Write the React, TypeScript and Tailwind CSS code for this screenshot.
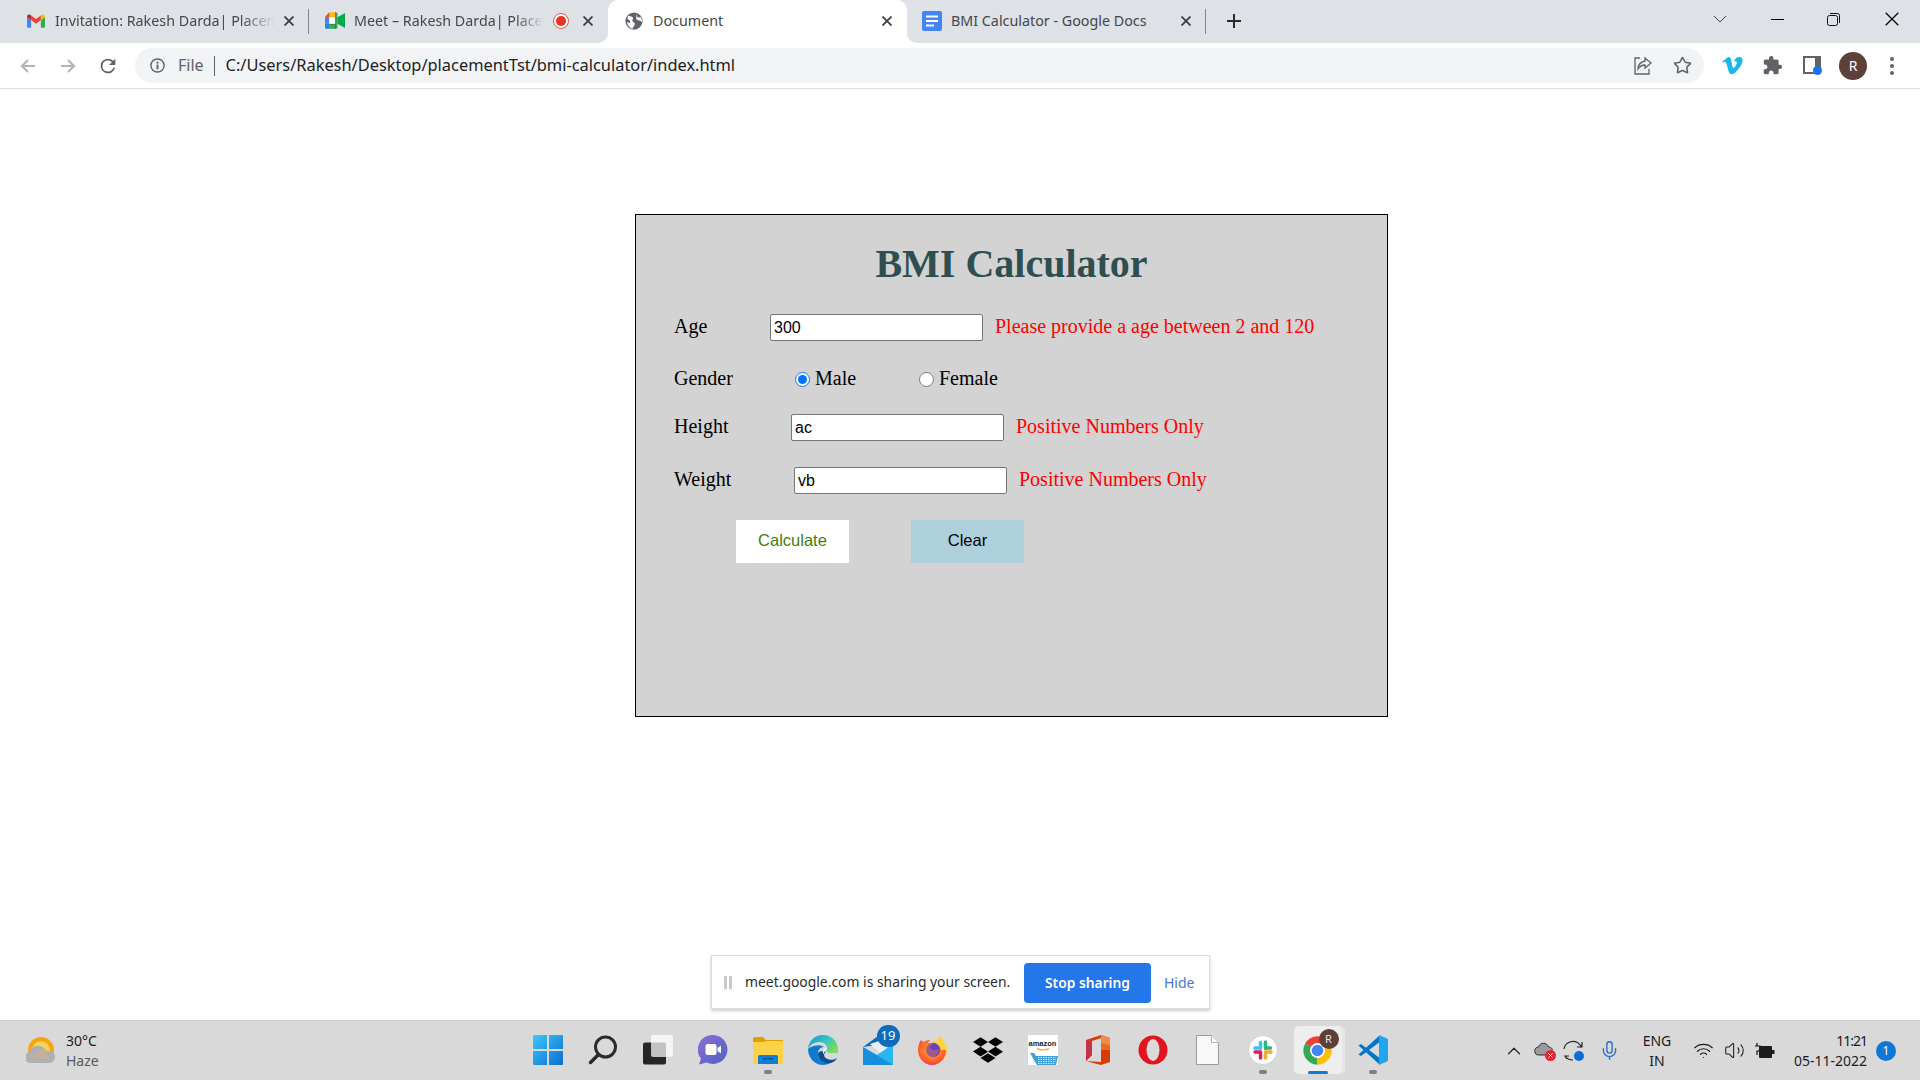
import React from "react";
import { FaVimeoV, FaDropbox } from "react-icons/fa";
import { MdExtension } from "react-icons/md";
import { Star, Mic, Wifi, Volume2, ChevronUp } from "lucide-react";

const Gmail = () => (
  <svg width="18" height="14" viewBox="0 0 24 18">
    <path fill="#4285f4" d="M0 16.5V3.5L5.5 7.6V18H1.5A1.5 1.5 0 0 1 0 16.5z" />
    <path fill="#34a853" d="M24 16.5V3.5L18.5 7.6V18H22.5A1.5 1.5 0 0 0 24 16.5z" />
    <path fill="#ea4335" d="M5.5 7.6 12 12.5l6.5-4.9V1.5L12 6.4 5.5 1.5z" />
    <path fill="#c5221f" d="M0 3.5V3C0 .8 2.5-.5 4.3.8L5.5 1.7V7.6z" />
    <path fill="#fbbc04" d="M18.5 7.6V1.7L19.7.8C21.5-.5 24 .8 24 3V3.5z" />
  </svg>
);
const Meet = () => (
  <svg width="20" height="17" viewBox="0 0 24 20">
    <path fill="#fbbc04" d="M5 0h8v6H0z" />
    <path fill="#ea4335" d="M5 0v6H0z" />
    <path fill="#4285f4" d="M0 6h5v8H0z" />
    <path fill="#1e88e5" d="M0 14h5v6H2a2 2 0 0 1-2-2z" />
    <path fill="#34a853" d="M5 14h8v6H5z" />
    <path fill="#00ac47" d="M15 6l9-5v18l-9-5z" />
    <path fill="#188038" d="M15 2v16c0 1-1 2-2 2h-1v-5H5V6h7V0h1c1 0 2 1 2 2z" opacity=".75" />
    <path fill="#ffffff" d="M5 6h7v8H5z" />
  </svg>
);
const Globe = () => (
  <svg width="18" height="18" viewBox="0 0 24 24">
    <circle cx="12" cy="12" r="11.5" fill="#5f6368" />
    <path fill="#fff" d="M4 5c2 1 4 0 6 2s-1 3 0 5 4 2 3 5-3 3-3 5.500C6 21 3 17 2.500 13L6 15l1-3-4-3zM15 2c1 2 0 4 2 5s3-1 4 0c1 2 2 4 2 6-2 0-3-2-5-2s-3-1-3-3 0-4 0-6z" />
  </svg>
);
const Docs = () => (
  <svg width="20" height="20" viewBox="0 0 20 20">
    <rect width="20" height="20" rx="2" fill="#4285f4" />
    <rect x="4" y="4.500" width="12" height="2" fill="#fff" />
    <rect x="4" y="9" width="12" height="2" fill="#fff" />
    <rect x="4" y="13.500" width="8" height="2" fill="#fff" />
  </svg>
);
const X = ({ size = 10, w = 1.8, c = "#3c4043" }: { size?: number; w?: number; c?: string }) => (
  <svg width={size} height={size} viewBox="0 0 10 10">
    <path d="M0.500 0.500l9 9M9.500 0.500l-9 9" stroke={c} strokeWidth={w} fill="none" />
  </svg>
);

function Tab({ left, width, icon, text, active, rec, textW, border }: { left: number; width: number; icon: React.ReactNode; text: string; active?: boolean; rec?: boolean; textW: number; border?: boolean }) {
  return (
    <div className={`relative flex h-full items-center pb-[2px] ${active ? "bg-white rounded-t-[10px]" : ""} ${border ? "after:absolute after:right-0 after:top-[9px] after:h-[25px] after:w-px after:bg-[#80868b]" : ""}`} style={{ width, paddingLeft: left }}>
      <div className="flex w-[20px] shrink-0 justify-center">{icon}</div>
      <div className={`ml-[9px] overflow-hidden whitespace-nowrap text-[14.300px] text-[#45474a] ${rec || text.startsWith("Inv") ? "[mask-image:linear-gradient(to_right,black_85%,transparent)]" : ""}`} style={{ width: textW, fontFamily: '"Noto Sans",sans-serif' }}>
        {text}
      </div>
      {rec && (
        <div className="ml-[9px] flex h-[16px] w-[16px] items-center justify-center rounded-full border border-[#e2574c] bg-white">
          <div className="h-[10px] w-[10px] rounded-full bg-[#ea3323]" />
        </div>
      )}
      <div className={rec ? "ml-[14px]" : "ml-auto mr-[15px]"}>
        <X />
      </div>
      {active && (
        <>
          <div className="absolute bottom-0 left-[-10px] h-[10px] w-[10px] bg-white">
            <div className="h-full w-full rounded-br-[10px] bg-[#dee1e6]" />
          </div>
          <div className="absolute bottom-0 right-[-10px] h-[10px] w-[10px] bg-white">
            <div className="h-full w-full rounded-bl-[10px] bg-[#dee1e6]" />
          </div>
        </>
      )}
    </div>
  );
}

function Row({ label, labelW, value, error }: { label: string; labelW: number; value: string; error: string }) {
  return (
    <div className="flex h-[27px] items-center text-[20px]">
      <span className="shrink-0 pb-[4px]" style={{ width: labelW }}>{label}</span>
      <input
        readOnly
        defaultValue={value}
        className="h-[27px] w-[213px] rounded-[2px] border border-[#767676] bg-white px-[3px] text-[16px] text-black outline-none"
        style={{ fontFamily: '"Liberation Sans",Arial,sans-serif' }}
      />
      <span className="ml-[12px] whitespace-nowrap pb-[4px] text-[#ff0000]">{error}</span>
    </div>
  );
}

const Win = () => (
  <svg width="30" height="30" viewBox="0 0 30 30">
    <defs>
      <linearGradient id="wg" x1="0" y1="0" x2="1" y2="1">
        <stop offset="0" stopColor="#3cc7fb" />
        <stop offset="1" stopColor="#0a6fcf" />
      </linearGradient>
    </defs>
    <path fill="url(#wg)" d="M1 0h13v14H0V1a1 1 0 0 1 1-1zM16 0h13a1 1 0 0 1 1 1v13H16zM0 16h14v14H1a1 1 0 0 1-1-1zM16 16h14v13a1 1 0 0 1-1 1H16z" />
  </svg>
);
const Search = () => (
  <svg width="30" height="30" viewBox="0 0 30 30" fill="none">
    <circle cx="17.500" cy="12" r="10" stroke="#2b2b2b" strokeWidth="3" />
    <path d="M10.500 19.500 2.500 27.500" stroke="#2b2b2b" strokeWidth="3.500" strokeLinecap="round" />
  </svg>
);
const TaskView = () => (
  <svg width="30" height="30" viewBox="0 0 30 30">
    <rect x="0" y="7.500" width="23" height="22" rx="2" fill="#262626" />
    <rect x="8" y="0" width="22" height="22" rx="2" fill="#fff" fillOpacity=".72" />
  </svg>
);
const Chat = () => (
  <svg width="30" height="30" viewBox="0 0 30 30">
    <defs>
      <linearGradient id="cg" x1="0" y1="0" x2="1" y2="1">
        <stop offset="0" stopColor="#8a6fd4" />
        <stop offset="1" stopColor="#4d63c6" />
      </linearGradient>
    </defs>
    <path fill="url(#cg)" d="M15 0a14.500 14.500 0 1 1-6.500 27.500L1 29.500l2-6A14.500 14.500 0 0 1 15 0z" />
    <rect x="7.500" y="9" width="11" height="11" rx="2" fill="#fff" />
    <path d="M19.500 13 23 10.500v8L19.500 16z" fill="#fff" />
  </svg>
);
const Folder = () => (
  <svg width="30" height="27" viewBox="0 0 30 27">
    <path fill="#e0a100" d="M0 2a2 2 0 0 1 2-2h8l3 3h17v4H0z" />
    <path fill="#fcd348" d="M0 5h11l2-1h16a1 1 0 0 1 1 1v21a1 1 0 0 1-1 1H1a1 1 0 0 1-1-1z" />
    <path fill="#0c7fd6" d="M5 27v-7a2 2 0 0 1 2-2h16a2 2 0 0 1 2 2v7z" />
    <rect x="10" y="21" width="10" height="1.500" fill="#0a4f94" />
  </svg>
);
const Edge = () => (
  <svg width="30" height="30" viewBox="0 0 30 30">
    <defs>
      <linearGradient id="eg" x1="0" y1="0" x2="1" y2=".6">
        <stop offset="0" stopColor="#1a8fd6" />
        <stop offset=".55" stopColor="#30c5c5" />
        <stop offset="1" stopColor="#7bdc5c" />
      </linearGradient>
    </defs>
    <path fill="url(#eg)" d="M15 0C7 0 .5 6 0 14c2-4 6-7 11-7 5 0 8 3 8 6 0 1.500-1 2.500-1 2.500l3 2.500h9c.3-1 0-3 0-4C30 6 23 0 15 0z" />
    <path fill="#0f7bd0" d="M0 14c0 9 7 16 15 16 3 0 5-.7 7-2-7 1-12-3-12-9 0-5 3-7 6-7-2-1-4-2-7-1.500C4 11 1 13 0 14z" />
    <path fill="#0b4e96" d="M10 19c0 6 6 11 13 9 3-1 5-3 6-5-3 2-6 2-8 1.500-3-.5-5-2.500-5-4.500 0-1.500 1-2.500 2-3-1-1-2-1-3-1-3 0-5 1-5 3z" />
    <path fill="#e8f3fb" d="M19 13c0 1-1 2.500-1 2.500-1.500.5-2 2-2 3.500-1-.5-2-3 0-5 .8-.8 2-1.500 3-1z" />
  </svg>
);
const Mail = () => (
  <div className="relative h-[30px] w-[30px]">
    <svg width="30" height="30" viewBox="0 0 30 30" className="absolute left-0 top-0">
      <path fill="#0f6cbd" d="M0 12 15 1h6v8z" />
      <path fill="#e9eff5" d="M7 9 19 5l6 10-7 4z" />
      <path fill="#29b6ef" d="M0 12l14 8L30 9v21H0z" />
      <path fill="#0f7fd6" d="M0 30V12l30 18z" opacity=".7" />
    </svg>
    <div className="absolute left-[14px] top-[-10px] flex h-[22px] w-[23px] items-center justify-center rounded-full bg-[#0f6cbd] text-[13px] text-white" style={{ fontFamily: '"Noto Sans",sans-serif' }}>19</div>
  </div>
);
const Firefox = () => (
  <svg width="30" height="30" viewBox="0 0 30 30">
    <defs>
      <radialGradient id="fg" cx=".5" cy=".4" r=".7">
        <stop offset="0" stopColor="#ffb13a" />
        <stop offset=".7" stopColor="#ff5a2a" />
        <stop offset="1" stopColor="#e31587" />
      </radialGradient>
    </defs>
    <path fill="#ffd43a" d="M21 0c3 3 8 9 8 15 0 8-6 14-14 14V6c3 0 6-2 6-6z" />
    <path fill="url(#fg)" d="M3 5c1 1 2 2 3 2 2-2 5-2 7-2-3 1-3 3-2 3 2 0 5-1 8 1 3 2 4 4 4 6h5c0 8-6 15-14 15S0 23 0 15c0-4 1-7 3-10z" />
    <circle cx="15" cy="15" r="7" fill="#6a3fc2" />
    <path fill="#ff8a2a" d="M8 12c1-3 5-5 8-4-2 1-4 3-4 5 2 3 7 2 9 1 0 4-3 8-7 8-4 0-7-3-7-7 0-1 .5-2 1-3z" opacity=".35" />
  </svg>
);
const Amazon = () => (
  <div className="flex h-[30px] w-[30px] flex-col items-center overflow-hidden bg-white pt-[5px]">
    <span className="text-[7.500px] font-bold leading-[8px] text-[#222]" style={{ fontFamily: '"Liberation Sans",Arial,sans-serif' }}>amazon</span>
    <svg width="30" height="17" viewBox="0 0 30 17">
      <path d="M9 0.500q6 3 12 0" stroke="#f39c12" strokeWidth="1.200" fill="none" />
      <path d="M2 5h4l2 3h22l-2 9H9z" fill="#3f9fd4" />
      <path d="M10 9.500h18M10 11.500h18M10 13.500h18M10 15.500h17" stroke="#fff" strokeWidth=".8" strokeDasharray="1.500 1" />
    </svg>
  </div>
);
const Office = () => (
  <svg width="24" height="30" viewBox="0 0 24 30">
    <path fill="#d83b01" d="M15 0l9 3v24l-9 3-15-4 15 1V3L6 6v14l-6 6V5z" />
    <path fill="#ea6a1f" d="M15 0l9 3v12h-9z" />
    <path fill="#c4314b" d="M0 5l6 1v14l-6 6z" />
    <path fill="#f09a5a" d="M15 0l9 3v7l-9-2z" opacity=".7" />
  </svg>
);
const Opera = () => (
  <svg width="30" height="30" viewBox="0 0 30 30">
    <circle cx="15" cy="15" r="14.500" fill="#e1141f" />
    <ellipse cx="15" cy="15" rx="6.500" ry="11" fill="#d9d9d9" />
  </svg>
);
const FileIcon = () => (
  <svg width="23" height="30" viewBox="0 0 23 30">
    <path d="M.500.500h15l7 7v22H.500z" fill="#f8f8f8" stroke="#9a9a9a" />
    <path d="M15.500.500v7h7" fill="#fff" stroke="#b5b5b5" />
  </svg>
);
const Slack = () => (
  <svg width="30" height="30" viewBox="0 0 30 30">
    <circle cx="15" cy="15" r="14.500" fill="#fff" stroke="#d0d0d0" />
    <g strokeWidth="3.500" strokeLinecap="round" fill="none">
      <path d="M12.500 7.500v6M7 13h5.500" stroke="#36c5f0" />
      <path d="M17.500 7v6.500M22.500 13h-5" stroke="#2eb67d" />
      <path d="M17.500 17h5.500M17.500 17v6" stroke="#ecb22e" />
      <path d="M12.500 17v6M7 17h5.500" stroke="#e01e5a" />
    </g>
  </svg>
);
const Chrome = () => (
  <div className="relative flex h-[48px] w-[48px] items-center justify-center rounded-[5px] bg-[#eeeeee] shadow-[3px_0_0_#e6e6e6]">
    <svg width="31" height="31" viewBox="0 0 48 48">
      <path fill="#ea4335" d="M24 24 4.950 13A22 22 0 0 1 43.050 13z" />
      <path fill="#34a853" d="M24 24 4.950 13A22 22 0 0 0 24 46z" />
      <path fill="#fbbc04" d="M24 24 43.050 13A22 22 0 0 1 24 46z" />
      <circle cx="24" cy="24" r="11.500" fill="#fff" />
      <circle cx="24" cy="24" r="9" fill="#4285f4" />
    </svg>
    <div className="absolute right-[3px] top-[3px] flex h-[20px] w-[20px] items-center justify-center rounded-full bg-[#5d4037] text-[11px] text-[#e8e0dc]" style={{ fontFamily: '"Noto Sans",sans-serif' }}>R</div>
  </div>
);
const VSCode = () => (
  <svg width="30" height="30" viewBox="0 0 30 30">
    <path fill="#0078c9" d="M.5 10.500 3 9l18 13.500V29L.5 10.500z" />
    <path fill="#0078c9" d="M.5 19.500 3 21 21 7.500V1L.5 19.500z" />
    <path fill="#1fa6ee" d="M21 0l8 3.500a1.500 1.500 0 0 1 1 1.500v20a1.500 1.500 0 0 1-1 1.500L21 30z" />
  </svg>
);
const Weather = () => (
  <svg width="30" height="28" viewBox="0 0 30 28">
    <circle cx="15" cy="13" r="13" fill="#f6a50e" />
    <circle cx="15" cy="13" r="9" fill="#f8d25a" />
    <path fill="#aab2b6" d="M5 26a5.500 5.500 0 0 1-1-11c1-5 5-7 9-6 3 0 6 2 7 5 6-1 10 3 9 7-.5 3-3 5-6 5z" />
    <path fill="#c2b29c" d="M8 22c0-5 3-10 8-10 3 0 5 2 5 4 2 1 2 4 1 6z" />
  </svg>
);

const DockItem = ({ children, dot }: { children: React.ReactNode; dot?: "gray" | "blue" }) => (
  <div className="relative flex h-full w-[55px] items-center justify-center pb-[1px]">
    {children}
    {dot === "gray" && <div className="absolute bottom-[6px] h-[4px] w-[8px] rounded-full bg-[#7f7f7f]" />}
    {dot === "blue" && <div className="absolute bottom-[6px] h-[3px] w-[20px] rounded-full bg-[#0f7ad8]" />}
  </div>
);

const TrayCell = ({ w, children }: { w: string; children: React.ReactNode }) => (
  <div className={`flex h-full items-center justify-center ${w}`}>{children}</div>
);

const ui = { fontFamily: '"Noto Sans",sans-serif' };

export default function App() {
  return (
    <div className="flex h-[1080px] w-[1920px] flex-col overflow-hidden bg-white">
      <div className="flex h-[43px] shrink-0 items-center bg-[#dee1e6]">
        <Tab left={26} width={309} icon={<Gmail />} text="Invitation: Rakesh Darda| Placeme" textW={220} border />
        <Tab left={16} width={299} icon={<Meet />} text="Meet – Rakesh Darda| Placem" textW={190} rec />
        <Tab left={16} width={299} active icon={<Globe />} text="Document" textW={150} />
        <Tab left={15} width={299} icon={<Docs />} text="BMI Calculator - Google Docs" textW={210} border />
        <svg className="ml-[20px] mb-[2px]" width="16" height="16" viewBox="0 0 16 16">
          <path d="M8 1v14M1 8h14" stroke="#2b2b2b" strokeWidth="2" />
        </svg>
        <div className="flex items-center pb-[5px]">
          <svg className="ml-[471px]" width="14" height="8" viewBox="0 0 14 8" fill="none">
            <path d="M1 1l6 6 6-6" stroke="#444" strokeWidth="1" />
          </svg>
          <div className="ml-[44px] h-px w-[13px] bg-black" />
          <svg className="ml-[43px]" width="13" height="13" viewBox="0 0 13 13" fill="none">
            <rect x=".5" y="2.500" width="10" height="10" rx="2" stroke="#111" />
            <path d="M3 .5h7.500a2 2 0 0 1 2 2V10" stroke="#111" />
          </svg>
          <div className="ml-[45px]">
            <X size={14} w={1} c="#111" />
          </div>
        </div>
      </div>

      <div className="flex h-[46px] shrink-0 items-center border-b border-[#dadce0] bg-white">
        <svg className="ml-[19px]" width="18" height="18" viewBox="0 0 18 18" fill="none">
          <path d="M16 9H3M9 3 3 9l6 6" stroke="#b0b3b7" strokeWidth="2" />
        </svg>
        <svg className="ml-[22px]" width="18" height="18" viewBox="0 0 18 18" fill="none">
          <path d="M2 9h13M9 3l6 6-6 6" stroke="#b0b3b7" strokeWidth="2" />
        </svg>
        <svg className="ml-[20px]" width="22" height="22" viewBox="0 0 24 24" fill="#5f6368">
          <path d="M17.650 6.350A7.950 7.950 0 0 0 12 4a8 8 0 1 0 7.740 10h-2.080A6 6 0 1 1 12 6c1.660 0 3.140.69 4.220 1.780L13 11h7V4z" />
        </svg>
        <div className="ml-[16px] flex h-[35px] w-[1569px] items-center rounded-full bg-[#f1f3f4]" style={ui}>
          <svg className="ml-[15px]" width="15" height="15" viewBox="0 0 16 16" fill="none">
            <circle cx="8" cy="8" r="7" stroke="#5f6368" strokeWidth="1.500" />
            <rect x="7" y="7" width="2" height="5" fill="#5f6368" />
            <rect x="7" y="4" width="2" height="2" fill="#5f6368" />
          </svg>
          <span className="ml-[13px] pb-[2px] text-[16px] text-[#5f6368]">File</span>
          <div className="ml-[10px] h-[20px] w-px bg-[#5f6368]" />
          <span className="ml-[11px] pb-[1px] text-[16.400px] text-[#202124]">C:/Users/Rakesh/Desktop/placementTst/bmi-calculator/index.html</span>
          <svg className="ml-auto" width="20" height="20" viewBox="0 0 20 20" fill="none">
            <path d="M7 2H2v16h14v-5" stroke="#5f6368" strokeWidth="1.300" />
            <path d="M12 2l6 5-6 5V9c-3 0-5 1-7 4 0-4 3-7 7-8z" stroke="#5f6368" strokeWidth="1.300" />
          </svg>
          <Star className="ml-[20px] mr-[12px]" size={19} color="#5f6368" strokeWidth={2} />
        </div>
        <FaVimeoV className="ml-[17px]" size={23} color="#1ab7ea" />
        <MdExtension className="ml-[18px]" size={21} color="#5f6368" />
        <svg className="ml-[20px]" width="20" height="20" viewBox="0 0 20 20">
          <path fill="#5f6368" fillRule="evenodd" d="M0 0h18v18H0zM2 2v14h10V2z" />
          <circle cx="14.500" cy="14.500" r="4.500" fill="#1a73e8" />
        </svg>
        <div className="ml-[16px] flex h-[28px] w-[28px] items-center justify-center rounded-full bg-[#5d4037] text-[14px] text-white" style={ui}>R</div>
        <div className="ml-[23px] flex flex-col gap-[3px]">
          <div className="h-[4px] w-[4px] rounded-full bg-[#5f6368]" />
          <div className="h-[4px] w-[4px] rounded-full bg-[#5f6368]" />
          <div className="h-[4px] w-[4px] rounded-full bg-[#5f6368]" />
        </div>
      </div>

      <main className="relative flex-1 overflow-hidden" style={{ fontFamily: '"Liberation Serif","Times New Roman",serif' }}>
        <div className="ml-[635px] mt-[125px] h-[503px] w-[753px] border border-black bg-[#d3d3d3] pl-[38px] text-black">
          <h1 className="-ml-[38px] mt-[26px] h-[46px] text-center text-[40px] font-bold leading-[46px] text-[#2f4f4f]">BMI Calculator</h1>
          <div className="mt-[27px]">
            <Row label="Age" labelW={96} value="300" error="Please provide a age between 2 and 120" />
          </div>
          <div className="mt-[25px] flex h-[26px] items-center text-[20px]">
            <span className="w-[121px] pb-[2px]">Gender</span>
            <input type="radio" name="g" defaultChecked className="h-[15px] w-[15px]" />
            <span className="ml-[5px] w-[104px] pb-[2px]">Male</span>
            <input type="radio" name="g" className="h-[15px] w-[15px]" />
            <span className="ml-[5px] pb-[2px]">Female</span>
          </div>
          <div className="mt-[22px]">
            <Row label="Height" labelW={117} value="ac" error="Positive Numbers Only" />
          </div>
          <div className="mt-[26px]">
            <Row label="Weight" labelW={120} value="vb" error="Positive Numbers Only" />
          </div>
          <div className="ml-[62px] mt-[26px] flex gap-[62px] text-[16.500px]" style={{ fontFamily: '"Liberation Sans",Arial,sans-serif' }}>
            <button className="h-[43px] w-[113px] bg-white pb-[2px] text-[#3f7f0a]">Calculate</button>
            <button className="h-[43px] w-[113px] bg-[#add0dc] pb-[2px] text-black">Clear</button>
          </div>
        </div>

        <div className="absolute bottom-[11px] left-[711px] flex h-[54px] w-[499px] items-center border border-[#dcdcdc] bg-white shadow-[0_2px_3px_rgba(0,0,0,0.2)]" style={ui}>
          <div className="ml-[12px] flex gap-[2px]">
            <div className="h-[13px] w-[3px] bg-[#c9c9c9]" />
            <div className="h-[13px] w-[3px] bg-[#c9c9c9]" />
          </div>
          <span className="ml-[13px] w-[266px] whitespace-nowrap text-[13.900px] text-[#2b2b2b]">meet.google.com is sharing your screen.</span>
          <button className="ml-[13px] mt-[2px] h-[40px] w-[127px] rounded-[4px] bg-[#2377e8] text-[13.800px] font-semibold text-white">Stop sharing</button>
          <span className="ml-[13px] text-[14px] text-[#4a74dc]">Hide</span>
        </div>
      </main>

      <div className="flex h-[60px] shrink-0 items-center border-t border-[#cfcfcf] bg-[#d9d9d9]" style={ui}>
        <div className="flex h-full w-[520px] items-center pl-[26px]">
          <Weather />
          <div className="ml-[10px] flex flex-col text-[14px] leading-[20px]">
            <span className="text-[#1c1c1c]">30°C</span>
            <span className="text-[#5a5a5a]">Haze</span>
          </div>
        </div>
        <div className="flex h-full w-[880px]">
          <DockItem><Win /></DockItem>
          <DockItem><Search /></DockItem>
          <DockItem><TaskView /></DockItem>
          <DockItem><Chat /></DockItem>
          <DockItem dot="gray"><Folder /></DockItem>
          <DockItem><Edge /></DockItem>
          <DockItem><Mail /></DockItem>
          <DockItem><Firefox /></DockItem>
          <DockItem><FaDropbox size={30} color="#000" /></DockItem>
          <DockItem><Amazon /></DockItem>
          <DockItem><Office /></DockItem>
          <DockItem><Opera /></DockItem>
          <DockItem><FileIcon /></DockItem>
          <DockItem dot="gray"><Slack /></DockItem>
          <DockItem dot="blue"><Chrome /></DockItem>
          <DockItem dot="gray"><VSCode /></DockItem>
        </div>
        <div className="flex h-full flex-1 items-center pl-[99px] text-[14px] text-[#1c1c1c]">
          <TrayCell w="w-[30px]"><ChevronUp size={22} color="#222" strokeWidth={1.3} /></TrayCell>
          <TrayCell w="w-[29px]">
            <div className="relative h-[20px] w-[20px]">
              <svg width="20" height="16" viewBox="0 0 20 16" className="absolute top-0">
                <path d="M5 14a4 4 0 0 1-.5-8C6 1 13 1 14.500 6 18 6 19 9 18 11l-3 3z" fill="#9b9b9b" stroke="#333" />
              </svg>
              <div className="absolute bottom-[0px] right-[-2px] flex h-[11px] w-[11px] items-center justify-center rounded-full bg-[#e0263a]">
                <X size={5} w={1.6} c="#fff" />
              </div>
            </div>
          </TrayCell>
          <TrayCell w="w-[32px]">
            <svg width="22" height="22" viewBox="0 0 22 22" fill="none">
              <path d="M1 9a9 9 0 0 1 16-4l2 2M19 2v5h-5" stroke="#222" strokeWidth="1.200" />
              <path d="M4 19l-2-3h4M2 16c2 3 5 4 8 4" stroke="#222" strokeWidth="1.200" />
              <circle cx="16" cy="16" r="5" fill="#0f6cd6" />
            </svg>
          </TrayCell>
          <TrayCell w="w-[38px]"><Mic size={21} color="#2a6fc9" strokeWidth={1.6} /></TrayCell>
          <TrayCell w="w-[58px]">
            <div className="flex flex-col items-center text-[14px] leading-[20px]">
              <span>ENG</span>
              <span>IN</span>
            </div>
          </TrayCell>
          <TrayCell w="w-[34px]"><Wifi size={21} color="#1c1c1c" strokeWidth={1.4} /></TrayCell>
          <TrayCell w="w-[29px]"><Volume2 size={21} color="#1c1c1c" strokeWidth={1.2} /></TrayCell>
          <TrayCell w="w-[31px]">
            <svg width="21" height="16" viewBox="0 0 21 16">
              <path d="M3 0v3M1 3h5v3a2 2 0 0 1-2 2H3v4" stroke="#111" strokeWidth="1.200" fill="none" />
              <rect x="5" y="3" width="13" height="12" rx="1" fill="#1c1c1c" />
              <rect x="18" y="7" width="2.500" height="4" fill="#1c1c1c" />
            </svg>
          </TrayCell>
          <div className="flex w-[87px] flex-col items-end text-[14px] leading-[20px]">
            <span className="tracking-[-1px]">11:21</span>
            <span>05-11-2022</span>
          </div>
          <div className="ml-[9px] flex h-[20px] w-[20px] items-center justify-center rounded-full bg-[#0f78d4] text-[12px] text-white">1</div>
        </div>
      </div>
    </div>
  );
}
